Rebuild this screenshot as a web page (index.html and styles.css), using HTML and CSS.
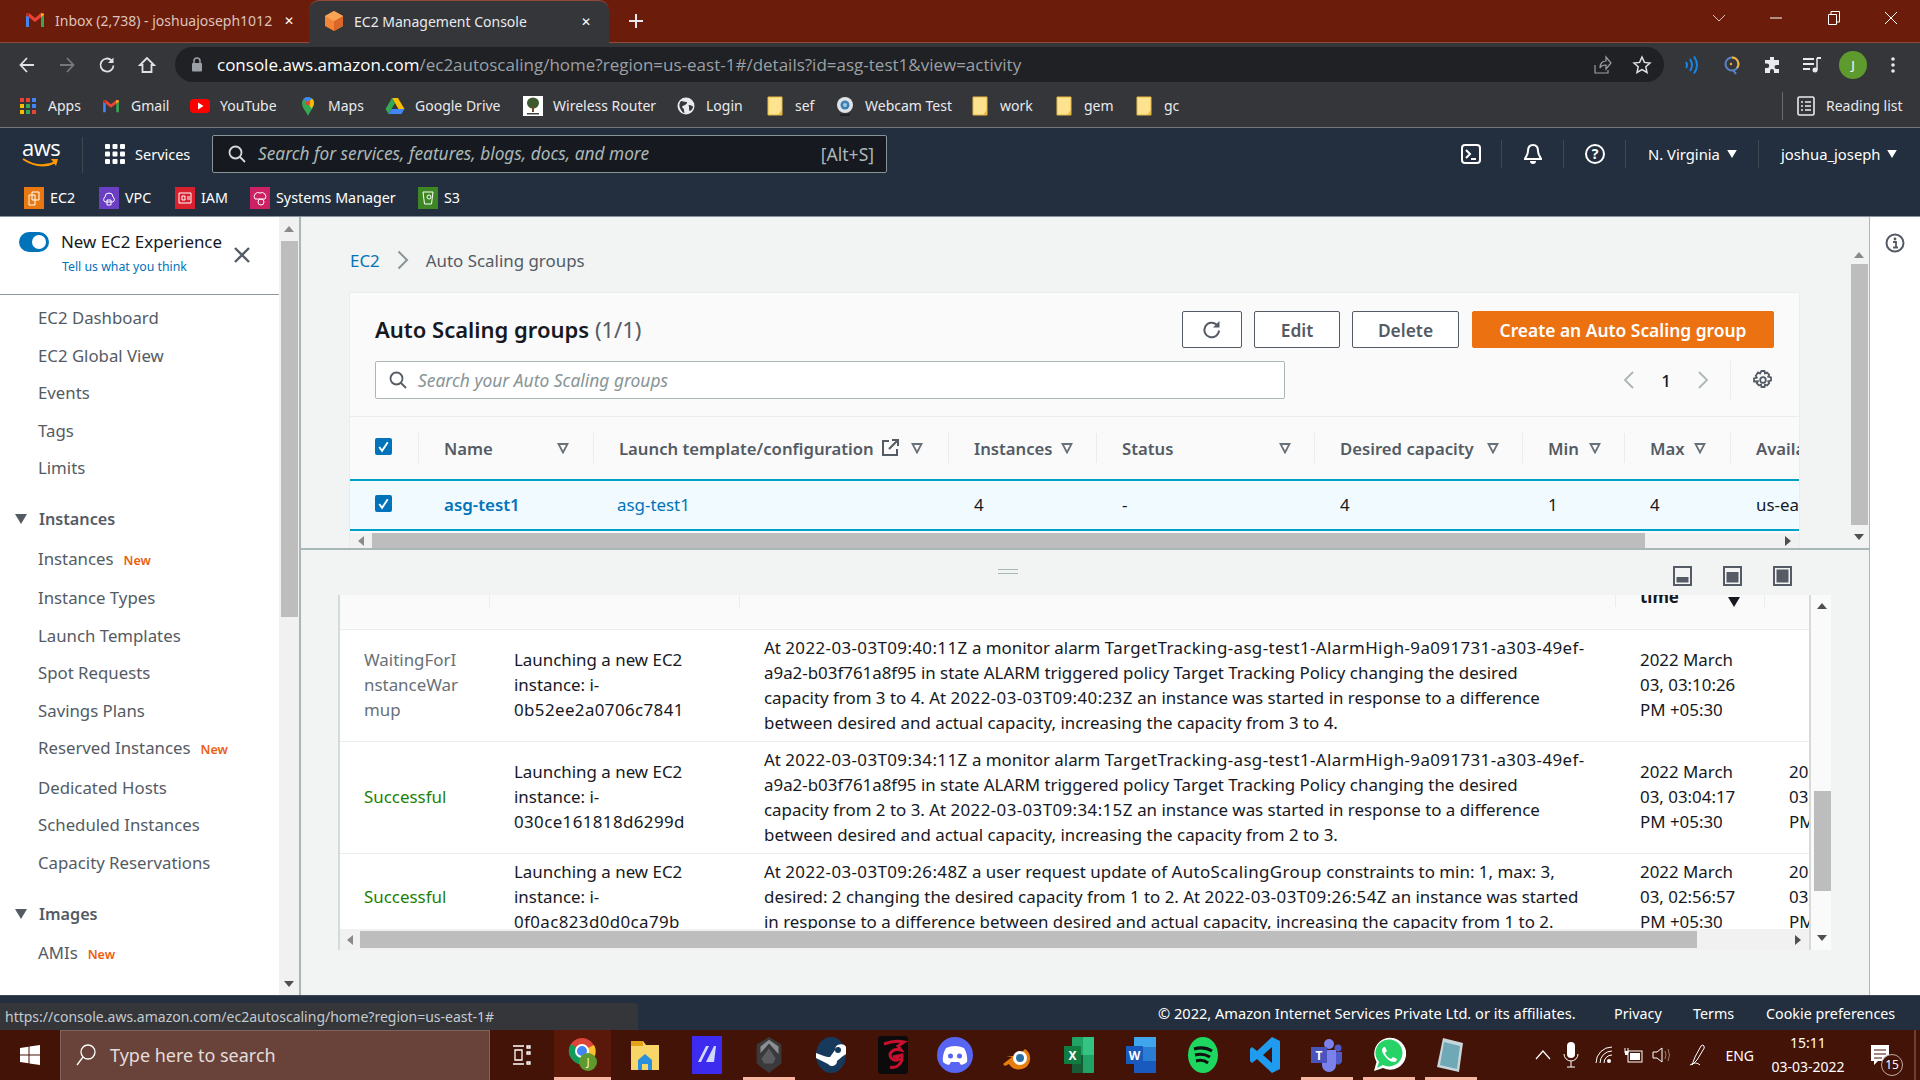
FILE: index.html
```html
<!DOCTYPE html>
<html lang="en">
<head>
<meta charset="utf-8">
<title>EC2 Management Console</title>
<link rel="stylesheet" href="styles.css">
</head>
<body>
<svg class="defs" width="0" height="0" aria-hidden="true">
  <symbol id="gmail" viewBox="0 0 20 16"><path d="M1 15V3l3 2v10z" fill="#4285f4"/><path d="M19 15V3l-3 2v10z" fill="#34a853"/><path d="M1 3l9 7 9-7v-1.500L16 1l-6 5-6-5-3 .5z" fill="#ea4335"/><path d="M16 1v4l3-2V2z" fill="#fbbc04"/><path d="M4 1v4L1 3V2z" fill="#c5221f"/></symbol>
  <symbol id="folder" viewBox="0 0 16 20"><path d="M1 1h14v18H1z" fill="#fde28f" stroke="#e8b93e"/><path d="M15 14l-4 5h4z" fill="#e8b93e"/></symbol>
  <symbol id="filter" viewBox="0 0 12 12"><path d="M1.500 2h9L6 10.500z" fill="none" stroke="#687078" stroke-width="1.800"/></symbol>
  <symbol id="check" viewBox="0 0 18 18"><rect width="18" height="18" rx="2" fill="#0073bb"/><path d="M4.500 9.500l3 4 6-9" fill="none" stroke="#fff" stroke-width="2"/></symbol>
  <symbol id="caret" viewBox="0 0 12 10"><path d="M0 0h12L6 10z" fill="currentColor"/></symbol>
</svg>

<header class="tabstrip">
  <div class="tab">
    <svg class="tab-icon" width="20" height="16"><use href="#gmail"/></svg>
    <span class="tab-title tab-title--dim">Inbox (2,738) - joshuajoseph1012</span>
    <span class="tab-close">✕</span>
  </div>
  <div class="tab tab--active">
    <svg class="tab-icon" width="20" height="22" viewBox="0 0 20 22"><path d="M10 1l9 5v10l-9 5-9-5V6z" fill="#f58536"/><path d="M10 11l9-5v10l-9 5z" fill="#d9672a"/><path d="M10 1l9 5-9 5-9-5z" fill="#f9a455"/></svg>
    <span class="tab-title">EC2 Management Console</span>
    <span class="tab-close">✕</span>
  </div>
  <svg class="new-tab" width="16" height="16" viewBox="0 0 16 16"><path d="M8 1v14M1 8h14" stroke="#e8eaed" stroke-width="2"/></svg>
  <div class="window-controls">
    <svg width="14" height="8" viewBox="0 0 14 8"><path d="M1 1l6 6 6-6" fill="none" stroke="#d9c5bf"/></svg>
    <svg width="14" height="14" viewBox="0 0 14 14"><path d="M1 7h12" stroke="#fff"/></svg>
    <svg width="14" height="14" viewBox="0 0 14 14"><path d="M1.500 3.500h8v10h-8zM4 3V.5h8.500V11H10" fill="none" stroke="#fff"/></svg>
    <svg width="14" height="14" viewBox="0 0 14 14"><path d="M1 1l12 12M13 1L1 13" stroke="#fff"/></svg>
  </div>
</header>

<section class="toolbar">
  <div class="nav-buttons">
    <button class="tb"><svg width="18" height="18" viewBox="0 0 18 18"><path d="M16 9H3M9 2L2.500 9 9 16" fill="none" stroke="#dee1e6" stroke-width="1.800"/></svg></button>
    <button class="tb"><svg width="18" height="18" viewBox="0 0 18 18"><path d="M2 9h13M9 2l6.500 7L9 16" fill="none" stroke="#75787c" stroke-width="1.800"/></svg></button>
    <button class="tb"><svg width="18" height="18" viewBox="0 0 18 18"><path d="M15.500 9.500A6.500 6.500 0 1 1 13.500 4.300" fill="none" stroke="#dee1e6" stroke-width="1.800"/><path d="M15.500 1.500v5.500H10z" fill="#dee1e6"/></svg></button>
    <button class="tb"><svg width="18" height="18" viewBox="0 0 18 18"><path d="M9 2L2 9h2.500v7h9V9H16z" fill="none" stroke="#dee1e6" stroke-width="1.800"/></svg></button>
  </div>
  <div class="urlbar">
    <svg class="lock" width="12" height="15" viewBox="0 0 12 15"><rect x="1" y="6" width="10" height="8.500" rx="1" fill="#9aa0a6"/><path d="M3 6V4a3 3 0 0 1 6 0v2" fill="none" stroke="#9aa0a6" stroke-width="1.500"/></svg>
    <span class="url"><span class="url-host">console.aws.amazon.com</span>/ec2autoscaling/home?region=us-east-1#/details?id=asg-test1&amp;view=activity</span>
    <svg class="url-action" width="20" height="20" viewBox="0 0 20 20"><path d="M3 10v8h13v-3M8 13c0-5 3-7 6-7V2l5 6-5 6v-4c-3 0-5 1-6 3z" fill="none" stroke="#9aa0a6" stroke-width="1.200"/></svg>
    <svg class="url-action" width="20" height="20" viewBox="0 0 20 20"><path d="M10 2l2.400 5.400 5.600.6-4.200 3.800 1.200 5.700L10 14.600 5 17.500l1.200-5.700L2 8l5.600-.6z" fill="none" stroke="#dee1e6" stroke-width="1.500"/></svg>
  </div>
  <div class="ext-buttons">
    <button class="tb"><svg width="18" height="20" viewBox="0 0 18 20"><path d="M3 7q2 3 0 6M7 4q4 6 0 12M11 1.500q6 8.500 0 17" fill="none" stroke="#1a84e6" stroke-width="2"/></svg></button>
    <button class="tb"><svg width="20" height="20" viewBox="0 0 20 20"><circle cx="10" cy="9" r="6.500" fill="none" stroke="#5c82c9" stroke-width="2"/><path d="M10 2.500a6.500 6.500 0 0 1 5 10.500" fill="none" stroke="#f2b134" stroke-width="2"/><path d="M11 15l3 4" stroke="#5c82c9" stroke-width="2"/><circle cx="9" cy="9" r="1.200" fill="#f2b134"/></svg></button>
    <button class="tb"><svg width="18" height="18" viewBox="0 0 18 18"><path d="M7 1h4v3h5v5h-2.500a2 2 0 0 0 0 4H16v4H11v-2a2 2 0 0 0-4 0v2H2v-5h2a2.200 2.200 0 0 0 0-4.500H2V4h5z" fill="#e8eaed"/></svg></button>
    <button class="tb"><svg width="20" height="18" viewBox="0 0 20 18"><path d="M1 3h11M1 8h11M1 13h7" stroke="#e8eaed" stroke-width="2"/><path d="M15 2v12" stroke="#e8eaed" stroke-width="1.500"/><path d="M15 2h4" stroke="#e8eaed" stroke-width="2"/><circle cx="13" cy="14" r="2.500" fill="#e8eaed"/></svg></button>
    <div class="avatar">J</div>
    <button class="tb"><svg width="4" height="18" viewBox="0 0 4 18"><circle cx="2" cy="3" r="1.800" fill="#e8eaed"/><circle cx="2" cy="9" r="1.800" fill="#e8eaed"/><circle cx="2" cy="15" r="1.800" fill="#e8eaed"/></svg></button>
  </div>
</section>

<nav class="bookmarks">
  <a class="bm"><svg width="16" height="16" viewBox="0 0 16 16"><path d="M0 0h4v4H0z" fill="#ea4335"/><path d="M6 0h4v4H6z" fill="#ea4335"/><path d="M12 0h4v4h-4z" fill="#4285f4"/><path d="M0 6h4v4H0z" fill="#fbbc04"/><path d="M6 6h4v4H6z" fill="#34a853"/><path d="M12 6h4v4h-4z" fill="#4285f4"/><path d="M0 12h4v4H0z" fill="#fbbc04"/><path d="M6 12h4v4H6z" fill="#34a853"/><path d="M12 12h4v4h-4z" fill="#ea4335"/></svg>Apps</a>
  <a class="bm"><svg width="18" height="14"><use href="#gmail"/></svg>Gmail</a>
  <a class="bm"><svg width="20" height="16" viewBox="0 0 20 16"><rect y="1" width="20" height="14" rx="4" fill="#f00"/><path d="M8 4.500l5.500 3.500L8 11.500z" fill="#fff"/></svg>YouTube</a>
  <a class="bm"><svg width="14" height="20" viewBox="0 0 14 20"><path d="M7 20C5 15 1 12 1 7a6 6 0 0 1 12 0c0 5-4 8-6 13z" fill="#34a853"/><path d="M2.500 3A6 6 0 0 1 11 2.500L7 7z" fill="#4285f4"/><path d="M13 7c0 2-1 3.500-2.500 5.500L7 7l4-4.500A6 6 0 0 1 13 7z" fill="#fbbc04"/><circle cx="7" cy="7" r="2.200" fill="#ea4335"/></svg>Maps</a>
  <a class="bm"><svg width="20" height="18" viewBox="0 0 20 18"><path d="M7 1h6l6.500 11h-6z" fill="#fbbc04"/><path d="M7 1L.5 12l3 5L10 6z" fill="#34a853"/><path d="M3.500 17h13l3-5H6.500z" fill="#4285f4"/></svg>Google Drive</a>
  <a class="bm"><svg width="20" height="20" viewBox="0 0 20 20"><rect width="20" height="20" fill="#fff"/><ellipse cx="10" cy="7" rx="6" ry="5.500" fill="#3d5a2e"/><rect x="9" y="10" width="2" height="6" fill="#6b4a2b"/><rect x="4" y="17" width="12" height="1.500" fill="#444"/></svg>Wireless Router</a>
  <a class="bm"><svg width="18" height="18" viewBox="0 0 18 18"><circle cx="9" cy="9" r="8.500" fill="#e8eaed"/><path d="M4 4c2 0 3 1 5 1s1 2-1 3-3 1-3 2 2 1 2 3 1 3 0 3-3-3-4-5-1-5 1-7zM12 8c2 0 4 1 4 2s-2 4-3 4-1-3-1-4-1-2 0-2z" fill="#35363a"/></svg>Login</a>
  <a class="bm"><svg width="16" height="20"><use href="#folder"/></svg>sef</a>
  <a class="bm"><svg width="18" height="20" viewBox="0 0 18 20"><circle cx="9" cy="9" r="8" fill="#dfe3e6"/><circle cx="9" cy="9" r="4.500" fill="#3d7fb3"/><circle cx="9" cy="9" r="2" fill="#9ccbe8"/><path d="M4 18h10v2H4z" fill="#222"/></svg>Webcam Test</a>
  <a class="bm"><svg width="16" height="20"><use href="#folder"/></svg>work</a>
  <a class="bm"><svg width="16" height="20"><use href="#folder"/></svg>gem</a>
  <a class="bm"><svg width="16" height="20"><use href="#folder"/></svg>gc</a>
  <a class="bm bm--reading"><svg width="18" height="20" viewBox="0 0 18 20"><rect x="1" y="1" width="16" height="18" rx="1.500" fill="none" stroke="#e8eaed" stroke-width="1.600"/><path d="M4 6h2M8 6h6M4 10h2M8 10h6M4 14h2M8 14h6" stroke="#e8eaed" stroke-width="1.500"/></svg>Reading list</a>
</nav>

<section class="awsnav">
  <div class="awsnav-top">
    <div class="aws-logo">
      <span class="aws-word">aws</span>
      <svg width="38" height="12" viewBox="0 0 38 12"><path d="M1 2q17 11 33 3" fill="none" stroke="#f90" stroke-width="2"/><path d="M29 2l7 0-2 7z" fill="#f90"/></svg>
    </div>
    <div class="services">
      <svg width="20" height="20" viewBox="0 0 20 20"><g fill="#fff"><rect width="5" height="5" rx="1"/><rect x="7.500" width="5" height="5" rx="1"/><rect x="15" width="5" height="5" rx="1"/><rect y="7.500" width="5" height="5" rx="1"/><rect x="7.500" y="7.500" width="5" height="5" rx="1"/><rect x="15" y="7.500" width="5" height="5" rx="1"/><rect y="15" width="5" height="5" rx="1"/><rect x="7.500" y="15" width="5" height="5" rx="1"/><rect x="15" y="15" width="5" height="5" rx="1"/></g></svg>
      <span>Services</span>
    </div>
    <div class="aws-search">
      <svg width="18" height="18" viewBox="0 0 18 18"><circle cx="7.500" cy="7.500" r="6" fill="none" stroke="#d5dbdb" stroke-width="1.800"/><path d="M12 12l5 5" stroke="#d5dbdb" stroke-width="1.800"/></svg>
      <span class="aws-search-ph">Search for services, features, blogs, docs, and more</span>
      <span class="aws-search-key">[Alt+S]</span>
    </div>
    <div class="awsnav-right">
      <div class="nav-ico"><svg width="20" height="20" viewBox="0 0 20 20"><rect x="1" y="1" width="18" height="18" rx="3" fill="none" stroke="#fff" stroke-width="2"/><path d="M5 6l4 4-4 4M10 15h5" fill="none" stroke="#fff" stroke-width="2"/></svg></div>
      <div class="nav-ico"><svg width="20" height="22" viewBox="0 0 20 22"><path d="M10 2c-4 0-5 3-5 6 0 4-3 7-3 8h16c0-1-3-4-3-8 0-3-1-6-5-6z" fill="none" stroke="#fff" stroke-width="2"/><path d="M7 18a3 3 0 0 0 6 0z" fill="#fff"/></svg></div>
      <div class="nav-ico"><svg width="20" height="20" viewBox="0 0 20 20"><circle cx="10" cy="10" r="9" fill="none" stroke="#fff" stroke-width="2"/><text x="10" y="15" text-anchor="middle" class="help-q">?</text></svg></div>
      <div class="nav-menu nav-menu--region">N. Virginia <svg class="nav-caret" width="10" height="8"><use href="#caret"/></svg></div>
      <div class="nav-menu nav-menu--user">joshua_joseph <svg class="nav-caret" width="10" height="8"><use href="#caret"/></svg></div>
    </div>
  </div>
  <div class="awsnav-short">
    <a class="short"><svg width="20" height="22" viewBox="0 0 20 22"><rect width="20" height="22" fill="#e8780f"/><path d="M8 5h7v8H8zM5 8h6v10H5z" fill="none" stroke="#fff"/></svg>EC2</a>
    <a class="short"><svg width="20" height="22" viewBox="0 0 20 22"><rect width="20" height="22" fill="#6b3fc4"/><path d="M6 10a4 4 0 0 1 8 0 3 3 0 0 1 0 5H6a3 3 0 0 1 0-5zM8 13h4v5H8z" fill="none" stroke="#fff"/></svg>VPC</a>
    <a class="short"><svg width="20" height="22" viewBox="0 0 20 22"><rect width="20" height="22" fill="#d9202f"/><path d="M4 6h12v10H4zM7 9h3v4H7zM12 10h3M12 12h3" fill="none" stroke="#fff"/></svg>IAM</a>
    <a class="short"><svg width="20" height="22" viewBox="0 0 20 22"><rect width="20" height="22" fill="#cc2264"/><path d="M5 12a4 4 0 0 1 5-6 4 4 0 0 1 5 6z" fill="none" stroke="#fff"/><circle cx="11" cy="15" r="3" fill="none" stroke="#fff"/></svg>Systems Manager</a>
    <a class="short"><svg width="20" height="22" viewBox="0 0 20 22"><rect width="20" height="22" fill="#3f8624"/><path d="M5 5h10l-1.500 12h-7z" fill="none" stroke="#fff"/><circle cx="11" cy="10" r="2" fill="none" stroke="#fff"/></svg>S3</a>
  </div>
</section>

<main class="main">
  <aside class="side">
    <div class="side-head">
      <div class="toggle"><span class="toggle-knob"></span></div>
      <div class="side-head-text">
        <div class="side-title">New EC2 Experience</div>
        <a class="side-link">Tell us what you think</a>
      </div>
      <svg class="side-x" width="18" height="18" viewBox="0 0 18 18"><path d="M2 2l14 14M16 2L2 16" stroke="#545b64" stroke-width="2.400"/></svg>
    </div>
    <ul class="side-list">
      <li class="side-item">EC2 Dashboard</li>
      <li class="side-item">EC2 Global View</li>
      <li class="side-item">Events</li>
      <li class="side-item">Tags</li>
      <li class="side-item">Limits</li>
      <li class="side-group"><svg width="12" height="10"><use href="#caret"/></svg>Instances</li>
      <li class="side-item side-item--new">Instances<span class="new">New</span></li>
      <li class="side-item">Instance Types</li>
      <li class="side-item">Launch Templates</li>
      <li class="side-item">Spot Requests</li>
      <li class="side-item">Savings Plans</li>
      <li class="side-item side-item--new">Reserved Instances<span class="new">New</span></li>
      <li class="side-item">Dedicated Hosts</li>
      <li class="side-item">Scheduled Instances</li>
      <li class="side-item">Capacity Reservations</li>
      <li class="side-group"><svg width="12" height="10"><use href="#caret"/></svg>Images</li>
      <li class="side-item">AMIs<span class="new">New</span></li>
    </ul>
  </aside>
  <div class="side-scroll">
    <span class="sb-arrow sb-up"></span>
    <span class="side-thumb"></span>
    <span class="sb-arrow sb-down sb-end"></span>
  </div>

  <div class="content">
    <section class="pane-top">
      <div class="pane-top-inner">
        <div class="crumbs"><a class="crumb-link">EC2</a>
          <svg width="12" height="20" viewBox="0 0 12 20"><path d="M1.500 1.500L10 10l-8.500 8.500" fill="none" stroke="#879596" stroke-width="2"/></svg>
          <span>Auto Scaling groups</span></div>
        <div class="card">
          <div class="card-head">
            <h1 class="card-title">Auto Scaling groups <span class="card-count">(1/1)</span></h1>
            <div class="card-actions">
              <button class="btn btn--icon"><svg width="20" height="20" viewBox="0 0 20 20"><path d="M17 10.500A7.300 7.300 0 1 1 14.500 4.500" fill="none" stroke="#545b64" stroke-width="2"/><path d="M17.500 1v6.500H11z" fill="#545b64"/></svg></button>
              <button class="btn btn--edit">Edit</button>
              <button class="btn btn--del">Delete</button>
              <button class="btn btn--primary">Create an Auto Scaling group</button>
            </div>
          </div>
          <div class="card-tools">
            <div class="filter-box">
              <svg width="18" height="18" viewBox="0 0 18 18"><circle cx="7.500" cy="7.500" r="6" fill="none" stroke="#545b64" stroke-width="1.800"/><path d="M12 12l5 5" stroke="#545b64" stroke-width="1.800"/></svg>
              <span>Search your Auto Scaling groups</span>
            </div>
            <div class="pager">
              <svg width="12" height="18" viewBox="0 0 12 18"><path d="M10 1L2 9l8 8" fill="none" stroke="#aab7b8" stroke-width="1.800"/></svg>
              <span class="pager-num">1</span>
              <svg width="12" height="18" viewBox="0 0 12 18"><path d="M2 1l8 8-8 8" fill="none" stroke="#aab7b8" stroke-width="1.800"/></svg>
            </div>
            <div class="gear">
              <svg width="20" height="20" viewBox="0 0 20 20"><path d="M8.500 1h3l.5 2.500 2-1 2.200 2.200-1 2 2.800.8v3l-2.800.8 1 2-2.200 2.200-2-1-.5 2.500h-3l-.5-2.500-2 1-2.200-2.200 1-2L1 11.500v-3l2.800-.8-1-2L5 2.500l2 1z" fill="none" stroke="#545b64" stroke-width="1.800"/><circle cx="10" cy="10" r="2.800" fill="none" stroke="#545b64" stroke-width="1.800"/></svg>
            </div>
          </div>
          <div class="grid-head">
            <div class="gh gh--check"><svg class="chk" width="17" height="17"><use href="#check"/></svg></div>
            <div class="gh"><span>Name</span><svg class="fl fl--name" width="12" height="12"><use href="#filter"/></svg></div>
            <div class="gh"><span>Launch template/configuration</span><svg class="ext" width="18" height="18" viewBox="0 0 18 18"><path d="M8 2H2v14h14v-6M11 1h6v6M17 1L8 10" fill="none" stroke="#545b64" stroke-width="2"/></svg><svg class="fl fl--launch" width="12" height="12"><use href="#filter"/></svg></div>
            <div class="gh"><span>Instances</span><svg class="fl fl--inst" width="12" height="12"><use href="#filter"/></svg></div>
            <div class="gh"><span>Status</span><svg class="fl fl--status" width="12" height="12"><use href="#filter"/></svg></div>
            <div class="gh"><span>Desired capacity</span><svg class="fl fl--des" width="12" height="12"><use href="#filter"/></svg></div>
            <div class="gh"><span>Min</span><svg class="fl fl--min" width="12" height="12"><use href="#filter"/></svg></div>
            <div class="gh"><span>Max</span><svg class="fl fl--max" width="12" height="12"><use href="#filter"/></svg></div>
            <div class="gh gh--last"><span>Availability Zones</span></div>
          </div>
          <div class="grid-row">
            <div class="gc gc--check"><svg class="chk" width="17" height="17"><use href="#check"/></svg></div>
            <div class="gc"><a class="link link--bold">asg-test1</a></div>
            <div class="gc gc--tight"><a class="link">asg-test1</a></div>
            <div class="gc">4</div>
            <div class="gc">-</div>
            <div class="gc">4</div>
            <div class="gc">1</div>
            <div class="gc">4</div>
            <div class="gc">us-east-1a</div>
          </div>
          <div class="hscroll hscroll--top">
            <span class="ar-left"></span>
            <span class="hthumb hthumb--top"></span>
            <span class="ar-right"></span>
          </div>
        </div>
      </div>
      <div class="v-scroll">
        <span class="sb-arrow sb-up"></span>
        <span class="v-thumb"></span>
        <span class="sb-arrow sb-down"></span>
      </div>
    </section>

    <section class="pane-bottom">
      <div class="split-bar">
        <span class="handle"></span>
        <div class="split-icons">
          <svg width="19" height="20" viewBox="0 0 19 20"><rect x="1" y="1" width="17" height="18" fill="none" stroke="#545b64" stroke-width="2"/><rect x="3.500" y="11" width="12" height="5.500" fill="#545b64"/></svg>
          <svg width="19" height="20" viewBox="0 0 19 20"><rect x="1" y="1" width="17" height="18" fill="none" stroke="#545b64" stroke-width="2"/><rect x="3.500" y="6" width="12" height="10.500" fill="#545b64"/></svg>
          <svg width="19" height="20" viewBox="0 0 19 20"><rect x="1" y="1" width="17" height="18" fill="none" stroke="#545b64" stroke-width="2"/><rect x="3.500" y="3.500" width="12" height="13" fill="#545b64"/></svg>
        </div>
      </div>
      <div class="activity">
        <div class="activity-main">
          <div class="activity-clip">
            <div class="act-row act-row--head">
              <div class="act-hc"></div><div class="act-hc"></div><div class="act-hc"></div>
              <div class="act-hc act-hc--time"><span class="time-word">time</span><svg width="12" height="10" class="time-caret"><use href="#caret"/></svg></div>
              <div class="act-hc act-hc--none"></div>
            </div>
            <div class="act-row">
              <div class="act-c act-c--wait">WaitingForI<br>nstanceWar<br>mup</div>
              <div class="act-c">Launching a new EC2<br>instance: i-<br><span class="n">0b52ee2a0706c7841</span></div>
              <div class="act-c">At <span class="n">2022-03-03T09:40:11Z</span> a monitor alarm <span class="n">TargetTracking-asg-test1-AlarmHigh-9a091731-a303-49ef-</span><br>a9a2-b03f761a8f95 in state ALARM triggered policy Target Tracking Policy changing the desired<br>capacity from 3 to 4. At <span class="n">2022-03-03T09:40:23Z</span> an instance was started in response to a difference<br>between desired and actual capacity, increasing the capacity from 3 to 4.</div>
              <div class="act-c">2022 March<br>03, 03:10:26<br>PM +05:30</div>
              <div class="act-c"></div>
            </div>
            <div class="act-row">
              <div class="act-c act-c--ok">Successful</div>
              <div class="act-c">Launching a new EC2<br>instance: i-<br><span class="n">030ce161818d6299d</span></div>
              <div class="act-c">At <span class="n">2022-03-03T09:34:11Z</span> a monitor alarm <span class="n">TargetTracking-asg-test1-AlarmHigh-9a091731-a303-49ef-</span><br>a9a2-b03f761a8f95 in state ALARM triggered policy Target Tracking Policy changing the desired<br>capacity from 2 to 3. At <span class="n">2022-03-03T09:34:15Z</span> an instance was started in response to a difference<br>between desired and actual capacity, increasing the capacity from 2 to 3.</div>
              <div class="act-c">2022 March<br>03, 03:04:17<br>PM +05:30</div>
              <div class="act-c">2022 March<br>03, 03:04:50<br>PM +05:30</div>
            </div>
            <div class="act-row act-row--last">
              <div class="act-c act-c--ok">Successful</div>
              <div class="act-c">Launching a new EC2<br>instance: i-<br><span class="n">0f0ac823d0d0ca79b</span></div>
              <div class="act-c">At <span class="n">2022-03-03T09:26:48Z</span> a user request update of <span class="n">AutoScalingGroup</span> constraints to min: 1, max: 3,<br>desired: 2 changing the desired capacity from 1 to 2. At <span class="n">2022-03-03T09:26:54Z</span> an instance was started<br>in response to a difference between desired and actual capacity, increasing the capacity from 1 to 2.</div>
              <div class="act-c">2022 March<br>03, 02:56:57<br>PM +05:30</div>
              <div class="act-c">2022 March<br>03, 02:57:30<br>PM +05:30</div>
            </div>
          </div>
          <div class="hscroll hscroll--bottom">
            <span class="ar-left"></span>
            <span class="hthumb hthumb--bottom"></span>
            <span class="ar-right"></span>
          </div>
        </div>
        <div class="activity-v">
          <span class="sb-arrow sb-up"></span>
          <span class="act-thumb"></span>
          <span class="sb-arrow sb-down"></span>
        </div>
      </div>
    </section>
  </div>

  <aside class="rail">
    <svg width="20" height="20" viewBox="0 0 20 20"><circle cx="10" cy="10" r="8.500" fill="none" stroke="#545b64" stroke-width="2"/><circle cx="10" cy="6" r="1.400" fill="#545b64"/><path d="M8 9h3v5M8 14.500h5" fill="none" stroke="#545b64" stroke-width="1.800"/></svg>
  </aside>
</main>

<footer class="foot">
  <span class="foot-copy">© 2022, Amazon Internet Services Private Ltd. or its affiliates.</span>
  <a class="foot-privacy">Privacy</a>
  <a class="foot-terms">Terms</a>
  <a class="foot-cookie">Cookie preferences</a>
  <div class="status-bubble">https://console.aws.amazon.com/ec2autoscaling/home?region=us-east-1#</div>
</footer>

<footer class="taskbar">
  <svg class="win" width="20" height="20" viewBox="0 0 20 20"><path d="M0 3l8.500-1.200v7.700H0zM9.500 1.600L20 0v9.500H9.500zM0 10.500h8.500v7.700L0 17zM9.500 10.500H20V20L9.500 18.400z" fill="#fff"/></svg>
  <div class="task-search">
    <svg width="22" height="24" viewBox="0 0 22 24"><circle cx="13" cy="9" r="7" fill="none" stroke="#fff" stroke-width="1.300"/><path d="M8 14l-6 8" stroke="#fff" stroke-width="1.300"/></svg>
    <span>Type here to search</span>
  </div>
  <div class="taskview"><svg width="20" height="20" viewBox="0 0 20 20"><path d="M1 1h11M1 19h11M3 5h7v10H3zM15 1h3v2h-3zM15 7h3v2h-3zM15 17h3v2h-3z" fill="none" stroke="#fff" stroke-width="1.300"/></svg></div>
  <div class="apps">
    <div class="app app--active app--open"><svg width="32" height="38" viewBox="0 0 32 38"><circle cx="14" cy="15" r="13" fill="#db4437"/><path d="M14 15L26 9a13 13 0 0 1-8 19z" fill="#fbc02d"/><path d="M14 15l4 13A13 13 0 0 1 3 22z" fill="#0f9d58"/><path d="M14 15L3 22A13 13 0 0 1 3 8z" fill="#0f9d58"/><circle cx="14" cy="15" r="6" fill="#4285f4" stroke="#fff" stroke-width="2"/><circle cx="20" cy="26" r="9" fill="#5f9a2e"/><text x="20" y="30" class="app-j">J</text></svg></div>
    <div class="app"><svg width="30" height="34" viewBox="0 0 30 34"><path d="M1 3h12l3 4h13v25H1z" fill="#f8d568"/><path d="M1 3h12v5H1z" fill="#e3a21a"/><path d="M8 22l7-6 7 6v10h-4v-6h-6v6H8z" fill="#2a8fdc"/></svg></div>
    <div class="app"><svg width="30" height="38" viewBox="0 0 30 38"><rect width="30" height="38" fill="#3d2cf0"/><path d="M6 26l8-16h3l-8 16zM14 26l8-16h2l-2 16h-2z" fill="#cfd9ff"/></svg></div>
    <div class="app app--open"><svg width="28" height="40" viewBox="0 0 28 40"><path d="M14 1l13 8v20l-13 10L1 29V9z" fill="#3a3a3c"/><path d="M14 4l10 7v8L14 8 5 18v-7z" fill="#8c8f92"/><path d="M14 13l7 11-3 5H9l-3-5z" fill="#5a5c5f"/></svg></div>
    <div class="app"><svg width="30" height="38" viewBox="0 0 30 38"><ellipse cx="15" cy="19" rx="15" ry="18" fill="#16395c"/><path d="M0 22l12 6a5 5 0 0 0 9-3l6-5a6 6 0 1 0-8-6l-5 7c-3 0-4 0-14-4z" fill="#fff"/><circle cx="22" cy="14" r="3" fill="#16395c"/></svg></div>
    <div class="app"><svg width="30" height="38" viewBox="0 0 30 38"><rect width="30" height="38" rx="3" fill="#0b0b0b"/><path d="M6 8q10-4 20-2l-6 4 3 4q-8-2-11 4c0 5 5 8 9 5-2-1-3-3-6-2l9-2c1 8-5 14-12 12" fill="none" stroke="#c8102e" stroke-width="3"/></svg></div>
    <div class="app"><svg width="36" height="36" viewBox="0 0 36 36"><circle cx="18" cy="18" r="18" fill="#5865f2"/><path d="M9 11q9-4 18 0 4 7 3 14-3 3-6 3l-2-3H14l-2 3q-3 0-6-3-1-7 3-14z" fill="#fff"/><circle cx="13.500" cy="19" r="2.500" fill="#5865f2"/><circle cx="22.500" cy="19" r="2.500" fill="#5865f2"/></svg></div>
    <div class="app"><svg width="30" height="30" viewBox="0 0 30 30"><path d="M1 24l9-7-6-1h12l7-7q6 4 5 11t-8 9q-9 2-13-5L3 26z" fill="#e87d0d"/><circle cx="18" cy="18" r="7" fill="#fff"/><circle cx="18" cy="18" r="4" fill="#2a6ea3"/></svg></div>
    <div class="app"><svg width="30" height="36" viewBox="0 0 30 36"><rect x="8" width="22" height="36" rx="1" fill="#21a366"/><path d="M19 0h11v18H19z" fill="#33c481"/><path d="M8 18h11v18H8z" fill="#185c37"/><rect y="9" width="17" height="18" fill="#107c41"/><text x="8.500" y="23" class="app-l">X</text></svg></div>
    <div class="app"><svg width="30" height="36" viewBox="0 0 30 36"><rect x="8" width="22" height="36" rx="1" fill="#2b7cd3"/><path d="M8 0h22v10H8z" fill="#41a5ee"/><path d="M8 24h22v12H8z" fill="#185abd"/><rect y="9" width="17" height="18" fill="#185abd"/><text x="8.500" y="23" class="app-l">W</text></svg></div>
    <div class="app"><svg width="30" height="36" viewBox="0 0 30 36"><ellipse cx="15" cy="18" rx="15" ry="18" fill="#1ed760"/><path d="M6 12q10-3 18 2M7 18q8-2 15 2M8 24q7-2 12 2" fill="none" stroke="#111" stroke-width="3"/></svg></div>
    <div class="app"><svg width="30" height="36" viewBox="0 0 30 36"><path d="M22 0l8 4v28l-8 4L7 22l-5 4-2-2V12l2-2 5 4zM22 10l-9 8 9 8z" fill="#1f9cf0"/></svg></div>
    <div class="app app--open"><svg width="32" height="36" viewBox="0 0 32 36"><circle cx="18" cy="7" r="5" fill="#7b83eb"/><circle cx="27" cy="11" r="3.500" fill="#5059c9"/><path d="M11 13h14v15a7 7 0 0 1-14 0z" fill="#7b83eb"/><path d="M25 15h6v9a4 4 0 0 1-6 3z" fill="#5059c9"/><rect y="10" width="16" height="16" fill="#4b53bc"/><text x="8" y="23" class="app-l">T</text></svg></div>
    <div class="app app--open"><svg width="34" height="36" viewBox="0 0 34 36"><path d="M2 34l2.500-9A16 16 0 1 1 11 31z" fill="#fff"/><path d="M5 31l2-6A13.500 13.500 0 1 1 11 28z" fill="#25d366"/><path d="M12 10c-2 1-3 4 0 8s6 7 10 7c2 0 3-2 3-3l-4-2-2 2c-3-1-5-4-6-6l2-2-2-4z" fill="#fff"/></svg></div>
    <div class="app app--open"><svg width="30" height="36" viewBox="0 0 30 36"><path d="M7 1l20 5-4 29L1 30z" fill="#c7d6da"/><path d="M8 5l16 4-3 23L4 28z" fill="#6fa9b6"/></svg></div>
  </div>
  <div class="tray">
    <svg class="tr tr--up" width="16" height="10" viewBox="0 0 16 10"><path d="M1 9l7-8 7 8" fill="none" stroke="#fff" stroke-width="1.200"/></svg>
    <svg class="tr tr--mic" width="16" height="28" viewBox="0 0 16 28"><rect x="4" y="1" width="8" height="16" rx="4" fill="#fff"/><path d="M1 13a7 7 0 0 0 14 0M8 20v6M4 26h8" fill="none" stroke="#fff"/></svg>
    <svg class="tr tr--wifi" width="18" height="18" viewBox="0 0 18 18"><path d="M1 17A16 16 0 0 1 17 1M5 17A12 12 0 0 1 17 5M9 17A8 8 0 0 1 17 9" fill="none" stroke="#fff" stroke-width="1"/><circle cx="14" cy="15" r="2" fill="#fff"/></svg>
    <svg class="tr tr--bat" width="20" height="16" viewBox="0 0 20 16"><path d="M2 1v5M5 1v5" stroke="#fff"/><rect x="2" y="4" width="3" height="4" fill="#fff"/><rect x="5" y="4" width="14" height="11" fill="none" stroke="#fff"/><rect x="7" y="6" width="10" height="7" fill="#fff"/></svg>
    <svg class="tr tr--spk" width="20" height="18" viewBox="0 0 20 18"><path d="M1 6h4l5-4v14l-5-4H1z" fill="none" stroke="#fff"/><path d="M13 5q2 4 0 8M16 3q3 6 0 12" fill="none" stroke="#9b8078"/></svg>
    <svg class="tr" width="20" height="24" viewBox="0 0 20 24"><path d="M4 22l3-8 6-11q2-2 3 0t-1 4l-6 10-5 5zM2 22q6-4 10 0" fill="none" stroke="#fff"/></svg>
    <span class="tray-lang">ENG</span>
    <div class="clock"><span>15:11</span><span>03-03-2022</span></div>
    <div class="notify">
      <svg width="20" height="22" viewBox="0 0 20 22"><path d="M1 1h18v16H8l-4 4v-4H1z" fill="#fff"/><path d="M4 6h12M4 10h12M4 14h8" stroke="#441307"/></svg>
      <span class="notify-badge">15</span>
    </div>
  </div>
</footer>
</body>
</html>
```

FILE: styles.css
```css
* { box-sizing: border-box; }
html, body { margin: 0; padding: 0; }
body {
  width: 1920px; height: 1080px; overflow: hidden;
  display: flex; flex-direction: column;
  font-family: "Noto Sans", "Open Sans", sans-serif;
  color: #16191f;
  background: #f2f3f3;
}
.defs { position: absolute; }
svg { display: block; flex: none; }
a { color: inherit; text-decoration: none; }
button { font-family: inherit; }
ul { list-style: none; margin: 0; padding: 0; }

/* browser chrome */
.tabstrip {
  height: 43px; flex: none;
  background: #6b1c0a;
  border-bottom: 1px solid #8f4a38;
  display: flex; align-items: stretch;
}
.tab {
  width: 309px; display: flex; align-items: center;
  padding: 0 0 2px 25px; color: #e3c9c2; font-size: 14px;
}
.tab--active {
  width: 300px; background: #35363a; color: #e8eaed;
  border-radius: 10px 10px 0 0; padding-left: 15px;
  margin-bottom: -1px;
  border-top: 1px solid #8f4a38;
}
.tab-icon { margin-right: 10px; }
.tab-title { flex: none; width: 217px; overflow: hidden; white-space: nowrap; font-size: 14px; }
.tab--active .tab-title { width: 225px; }
.tab-title--dim { color: #dcc3bc; }
.tab-close { font-size: 12px; color: #fff; margin-left: 12px; }
.tab--active .tab-close { margin-left: 2px; }
.new-tab { align-self: center; margin-left: 19px; }
.window-controls {
  margin-left: auto; width: 208px; flex: none;
  display: flex; align-items: center; justify-content: space-between;
  padding: 0 22px 6px 0;
}
.toolbar {
  height: 43px; flex: none; background: #35363a;
  display: flex; align-items: center;
  padding-left: 7px;
}
.nav-buttons { display: flex; width: 168px; flex: none; }
.tb {
  width: 40px; height: 35px; padding: 0; border: 0; background: none;
  display: flex; align-items: center; justify-content: center;
}
.urlbar {
  width: 1489px; height: 35px; flex: none;
  background: #202124; border-radius: 18px;
  display: flex; align-items: center;
  padding-left: 16px; padding-right: 12px;
}
.lock { margin-right: 14px; }
.url { font-size: 17px; color: #9aa0a6; white-space: nowrap; flex: 1; font-family: "Open Sans", sans-serif; }
.url-host { color: #fff; }
.url-action { margin-left: 20px; }
.ext-buttons { display: flex; align-items: center; margin-left: 8px; }
.avatar {
  width: 28px; height: 28px; border-radius: 50%; background: #5f9a2e;
  color: #fff; font-size: 13px; display: flex; align-items: center; justify-content: center;
  margin: 0 6px 0 7px;
}
.bookmarks {
  height: 42px; flex: none; background: #35363a;
  border-bottom: 1px solid #77787a;
  display: grid;
  grid-template-columns: 83px 89px 108px 87px 138px 153px 89px 70px 135px 84px 80px 648px 1fr;
  align-items: center;
  padding: 0 0 2px 18px;
  color: #e8eaed; font-size: 14px;
}
.bm { display: flex; align-items: center; gap: 10px; white-space: nowrap; }
.bm svg { width: 20px; }
.bm--reading { border-left: 1px solid #6a6b6e; padding-left: 13px; height: 28px; }

/* aws nav */
.awsnav { flex: none; background: #232f3e; color: #fff; height: 89px; border-bottom: 1px solid #8a9299; }
.awsnav-top { height: 51px; display: flex; align-items: center; padding-left: 22px; }
.aws-logo {
  width: 61px; height: 36px; flex: none; display: flex; flex-direction: column;
  border-right: 1px solid #414750; margin-top: 3px;
}
.aws-word { font-size: 22px; line-height: 20px; font-family: "Open Sans", sans-serif; letter-spacing: -0.500px; }
.services { display: flex; align-items: center; gap: 10px; margin-left: 22px; width: 107px; font-size: 14.500px; flex: none; }
.aws-search {
  width: 675px; height: 38px; flex: none; background: #16191f;
  border: 1px solid #879596; border-radius: 2px;
  display: flex; align-items: center; padding: 0 12px 0 15px;
  color: #aab7b8; font-size: 17.300px;
}
.aws-search-ph { font-style: italic; margin-left: 12px; flex: 1; white-space: nowrap; }
.aws-search-key { font-size: 17.500px; }
.awsnav-right { margin-left: auto; display: flex; align-items: center; font-size: 14.800px; height: 28px; }
.nav-ico { width: 62px; height: 28px; display: flex; align-items: center; justify-content: center; border-right: 1px solid #414750; }
.help-q { font-size: 14px; font-weight: 700; fill: #fff; }
.nav-menu { height: 28px; display: flex; align-items: center; white-space: nowrap; }
.nav-menu--region { width: 133px; padding-left: 22px; border-right: 1px solid #414750; }
.nav-menu--user { width: 161px; padding-left: 22px; }
.nav-caret { margin-left: 7px; color: #fff; }
.awsnav-short { height: 37px; display: grid; grid-template-columns: 75px 76px 75px 168px 1fr; align-items: center; padding-left: 24px; font-size: 14.300px; }
.short { display: flex; align-items: center; gap: 6px; white-space: nowrap; }

/* main */
.main { height: 778px; flex: none; display: flex; background: #f2f3f3; }
.side { width: 279px; flex: none; background: #fff; color: #545b64; overflow: hidden; }
.side-head { height: 78px; border-bottom: 1px solid #8d969f; display: flex; padding: 15px 0 0 19px; position: relative; }
.toggle { width: 30px; height: 20px; border-radius: 10px; background: #0073bb; position: relative; flex: none; }
.toggle-knob { position: absolute; right: 3px; top: 3px; width: 14px; height: 14px; border-radius: 50%; background: #fff; }
.side-head-text { margin-left: 12px; }
.side-title { color: #16191f; font-size: 16.900px; line-height: 20px; white-space: nowrap; }
.side-link { color: #0073bb; font-size: 12.300px; display: block; margin-top: 6px; line-height: 18px; margin-left: 1px; }
.side-x { position: absolute; left: 233px; top: 29px; }
.side-list { padding-top: 4px; }
.side-item { height: 37.500px; line-height: 37.500px; padding-left: 38px; font-size: 16.800px; white-space: nowrap; }
.side-item--new { margin-bottom: 2px; }
.side-group { height: 37.500px; display: flex; align-items: center; margin: 14px 0 1.500px; font-size: 16.200px; font-weight: 600; padding-left: 15px; gap: 12px; color: #545b64; }
.new { color: #ec5f13; font-size: 12.500px; font-weight: 600; margin-left: 10px; }
.side-scroll { width: 22px; flex: none; background: #f1f1f1; border-right: 2px solid #aab7b8; display: flex; flex-direction: column; align-items: center; padding: 0 2px; }
.side-thumb { width: 17px; height: 376px; background: #bdbdbd; margin-top: 9px; flex: none; }
.sb-arrow { display: block; width: 0; height: 0; border-left: 5px solid transparent; border-right: 5px solid transparent; flex: none; }
.sb-up { border-bottom: 6px solid #8a8a8a; margin-top: 7px; }
.sb-down { border-top: 6px solid #505050; }
.sb-end { margin-top: auto; margin-bottom: 8px; }
.side-scroll .sb-up { margin-top: 9px; }

.content { flex: 1; min-width: 0; display: flex; flex-direction: column; border-right: 1px solid #aab7b8; }
.pane-top { height: 333px; flex: none; display: flex; border-bottom: 2px solid #aab7b8; }
.pane-top-inner { flex: 1; min-width: 0; padding-left: 48px; }
.crumbs { height: 75px; display: flex; align-items: center; font-size: 16.900px; color: #545b64; padding: 11px 0 0 1px; }
.crumbs svg { margin: 0 17px; }
.crumb-link { color: #0073bb; }
.card {
  width: 1451px; height: 256px; background: #fafafa;
  border: 1px solid #eaeded; border-bottom: 0; overflow: hidden;
  display: flex; flex-direction: column;
}
.card-head { height: 68px; flex: none; display: flex; align-items: flex-start; padding: 18px 25px 0; }
.card-title { margin: 0; font-size: 22px; line-height: 37px; font-weight: 600; color: #16191f; white-space: nowrap; }
.card-count { font-weight: 400; color: #545b64; }
.card-actions { margin-left: auto; display: flex; gap: 12px; }
.btn {
  height: 37px; background: #fff; border: 1px solid #545b64; border-radius: 2px;
  font-size: 17.400px; font-weight: 600; color: #545b64; padding: 0;
  display: flex; align-items: center; justify-content: center;
}
.btn--icon { width: 60px; }
.btn--edit { width: 86px; }
.btn--del { width: 107px; margin-right: 1px; }
.btn--primary { width: 302px; background: #ec7211; border-color: #ec7211; color: #fff; }
.card-tools { height: 56px; flex: none; display: flex; align-items: flex-start; padding-left: 25px; border-bottom: 1px solid #eaeded; }
.filter-box {
  width: 910px; height: 38px; flex: none; background: #fff; border: 1px solid #aab7b8; border-radius: 2px;
  display: flex; align-items: center; padding-left: 13px; gap: 11px;
  font-style: italic; color: #879596; font-size: 17.400px;
}
.pager { width: 86px; margin-left: 338px; height: 38px; display: flex; align-items: center; justify-content: space-between; flex: none; font-size: 16.900px; }
.pager-num { color: #16191f; font-weight: 500; }
.gear { width: 74px; height: 38px; margin-left: 21px; border-left: 1px solid #eaeded; display: flex; align-items: center; padding-left: 22px; flex: none; }

.grid-head, .grid-row {
  display: grid;
  grid-template-columns: 69px 175px 355px 148px 218px 208px 102px 106px 300px;
  flex: none; width: 1800px;
}
.grid-head { height: 62px; padding: 16px 0; }
.gh {
  display: flex; align-items: center; padding-left: 25px; font-size: 16.700px; font-weight: 600; color: #545b64;
  border-right: 1px solid #eaeded; white-space: nowrap; height: 30px;
}
.gh--last { border-right: 0; }
.chk { margin-top: -3px; }
.fl { margin-left: 11px; }
.fl--name { margin-left: 64px; }
.fl--status { margin-left: 106px; }
.fl--inst { margin-left: 8px; }
.fl--launch { margin-left: 12px; }
.fl--des { margin-left: 13px; }
.fl--min { margin-left: 10px; }
.fl--max { margin-left: 9px; }
.ext { margin-left: 7px; }
.grid-row {
  height: 52px; background: #f1faff;
  border-top: 2px solid #00a1c9; border-bottom: 2px solid #00a1c9;
  width: 1450px;
}
.gc { padding: 0 0 2px 25px; font-size: 16.900px; display: flex; align-items: center; color: #16191f; white-space: nowrap; }
.gc--check { padding-bottom: 0; }
.gc--tight { padding-left: 23px; }
.link { color: #0073bb; }
.link--bold { font-weight: 600; }
.hscroll { display: flex; align-items: center; background: #f1f1f1; flex: none; }
.hscroll--top { height: 16px; margin-top: 2px; padding-left: 8px; }
.ar-left { width: 0; height: 0; border-top: 5px solid transparent; border-bottom: 5px solid transparent; border-right: 6px solid #8a8a8a; flex: none; }
.ar-right { width: 0; height: 0; border-top: 5px solid transparent; border-bottom: 5px solid transparent; border-left: 6px solid #505050; flex: none; margin-left: auto; margin-right: 8px; }
.hthumb { display: block; height: 100%; background: #bdbdbd; flex: none; }
.hthumb--top { width: 1273px; margin-left: 8px; }
.v-scroll { width: 20px; flex: none; display: flex; flex-direction: column; align-items: center; margin-left: -1px; height: 331px; }
.v-scroll .sb-up { margin-top: 35px; }
.v-thumb { width: 17px; height: 261px; background: #bdbdbd; margin-top: 6px; flex: none; }
.v-scroll .sb-down { margin-top: 9px; }

.pane-bottom { flex: 1; min-height: 0; padding-left: 37px; display: flex; flex-direction: column; position: relative; }
.split-bar { height: 45px; flex: none; display: flex; align-items: center; justify-content: flex-end; padding: 7px 77px 0 0; }
.handle { position: absolute; left: 697px; top: 19px; width: 20px; height: 5px; border-top: 1px solid #aab7b8; border-bottom: 1px solid #aab7b8; }
.split-icons { display: flex; gap: 31px; }
.activity { display: flex; height: 355px; flex: none; }
.activity-main { width: 1473px; flex: none; border-left: 2px solid #d5dbdb; border-right: 2px solid #d5dbdb; display: flex; flex-direction: column; }
.activity-clip { height: 334px; overflow: hidden; flex: none; background: #fff; }
.act-row {
  display: grid; grid-template-columns: 150px 250px 876px 149px 300px;
  height: 112px; border-bottom: 1px solid #eaeded;
  width: 1725px;
}
.act-row--head { height: 35px; background: #fafafa; width: auto; grid-template-columns: 150px 250px 876px 149px 100px; }
.act-hc { height: 12px; border-right: 1px solid #eaeded; }
.act-hc--none { border-right: 0; }
.act-hc--time { position: relative; font-size: 16.900px; font-weight: 700; }
.time-word { position: absolute; left: 24px; top: -8px; line-height: 20px; color: #16191f; }
.time-caret { position: absolute; left: 112px; top: 2px; color: #16191f; }
.act-row--last { height: 87px; border-bottom: 0; }
.act-c {
  padding: 5px 0 7px 24px; font-size: 16.900px; line-height: 25px; white-space: nowrap;
  display: block; min-width: 0; overflow: hidden; align-self: center; color: #16191f;
}
.n { letter-spacing: 0.400px; }
.act-c--wait { color: #687078; }
.act-c--ok { color: #1d8102; }
.hscroll--bottom { height: 21px; padding: 2px 0 2px 7px; }
.hthumb--bottom { width: 1337px; margin-left: 7px; }
.activity-v { width: 20px; flex: none; background: #fafafa; display: flex; flex-direction: column; align-items: center; padding-left: 2px; }
.activity-v .sb-up { margin-top: 8px; border-bottom-color: #505050; }
.act-thumb { width: 17px; height: 100px; background: #bdbdbd; margin-top: 182px; flex: none; }
.activity-v .sb-down { margin-top: 44px; }
.rail { width: 50px; flex: none; background: #fff; display: flex; justify-content: center; padding-top: 16px; }

/* aws footer */
.foot {
  height: 35px; flex: none; background: #232f3e; color: #fff; font-size: 14.300px;
  border-top: 1px solid #3d4651;
  display: flex; align-items: center; position: relative; white-space: nowrap;
  padding-left: 1158px;
}
.foot-copy { width: 456px; flex: none; font-size: 14.600px; }
.foot-privacy { width: 79px; flex: none; }
.foot-terms { width: 73px; flex: none; }
.status-bubble {
  position: absolute; left: 0; bottom: 0; width: 638px; height: 27px;
  background: #35363a; color: #c3cad0; font-size: 14px; line-height: 27px; padding-left: 5px;
  border-radius: 0 4px 0 0;
}

/* windows taskbar */
.taskbar { height: 50px; flex: none; background: #441307; display: flex; align-items: center; color: #fff; }
.win { margin-left: 20px; }
.task-search {
  width: 430px; height: 50px; margin-left: 20px; flex: none;
  background: #69433a; border: 1px solid #83645c; border-bottom: 0;
  display: flex; align-items: center; padding: 0 0 2px 14px; gap: 13px;
  font-size: 18px; color: #e6dcd9;
}
.taskview { width: 64px; flex: none; display: flex; justify-content: center; }
.apps { display: flex; height: 50px; flex: none; }
.app { width: 62px; height: 50px; flex: none; display: flex; align-items: center; justify-content: center; position: relative; }
.app svg { max-height: 38px; }
.app--active { background: #5a180a; width: 57px; margin-right: 3px; padding-left: 2px; }
.app--open::after { content: ""; position: absolute; left: 5px; right: 5px; bottom: 0; height: 3px; background: #f7b7a3; }
.app--active::after { left: 0; right: 0; }
.app-j { font-size: 10px; fill: #fff; text-anchor: middle; }
.app-l { font-size: 12px; font-weight: 700; fill: #fff; text-anchor: middle; }
.tray { margin-left: auto; margin-right: 4px; display: flex; align-items: center; height: 50px; border-right: 2px solid #6c3f33; flex: none; }
.tr { margin-right: 13px; }
.tr--up { margin-right: 12px; }
.tr--mic { margin-right: 16px; }
.tr--wifi { margin-right: 10px; }
.tr--bat { margin-right: 9px; }
.tr--spk { margin-right: 16px; }
.tray-lang { font-size: 14px; margin-left: 4px; margin-right: 16px; }
.clock { display: flex; flex-direction: column; align-items: center; font-size: 14px; line-height: 24px; width: 76px; }
.notify { width: 68px; display: flex; justify-content: center; position: relative; }
.notify-badge {
  position: absolute; left: 35px; top: 10px; width: 22px; height: 22px; border-radius: 50%;
  background: #441307; border: 1px solid #bfaaa5; font-size: 12px; line-height: 20px; text-align: center;
}
```
